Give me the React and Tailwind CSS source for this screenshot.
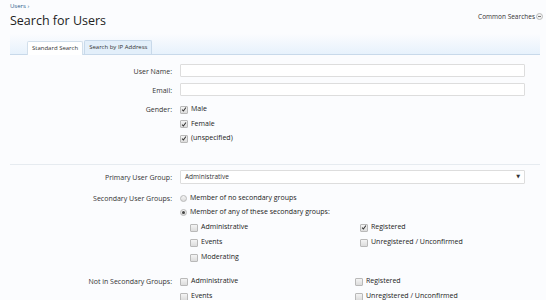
import React from "react";

const font = { fontFamily: '"Segoe UI", "Open Sans", "DejaVu Sans", sans-serif' };

function Check({ checked }) {
  return (
    <span className="inline-flex items-center justify-center w-[8px] h-[8px] border border-[#b9b9b9] bg-gradient-to-b from-[#f4f4f4] to-[#dcdcdc] rounded-[1px] mr-[3px] shrink-0">
      {checked && (
        <svg width="7" height="7" viewBox="0 0 8 8">
          <path d="M1.5 4.2 L3.2 6 L6.6 1.4" stroke="#333" strokeWidth="1.4" fill="none" />
        </svg>
      )}
    </span>
  );
}

function Radio({ checked }) {
  return (
    <span className="inline-flex items-center justify-center w-[7px] h-[7px] rounded-full border border-[#b9b9b9] bg-gradient-to-b from-[#f4f4f4] to-[#dcdcdc] mr-[3px] shrink-0">
      {checked && <span className="w-[3px] h-[3px] rounded-full bg-[#444]" />}
    </span>
  );
}

function Opt({ checked, children, radio, h = "h-[15px]" }) {
  return (
    <div className={"flex items-center text-[7px] text-[#222] " + h}>
      {radio ? <Radio checked={checked} /> : <Check checked={checked} />}
      <span>{children}</span>
    </div>
  );
}

function Row({ label, children, className = "" }) {
  return (
    <div className={"flex " + className}>
      <div className="w-[172px] text-right text-[7px] text-[#333] shrink-0 leading-[15px]">{label}</div>
      <div className="ml-[8px] flex-1">{children}</div>
    </div>
  );
}

export default function App() {
  return (
    <div className="w-[546px] h-[300px] overflow-hidden bg-[#fbfcfe]" style={font}>
      <div className="pl-[10px] pr-[3px] pt-[2px]">
        <div className="text-[6px] text-[#2b5c8c] leading-[8px]">Users ›</div>
        <div className="flex items-start justify-between">
          <h1 className="text-[12.5px] text-[#222] leading-[18px] mt-[2px]">Search for Users</h1>
          <div className="flex items-center text-[6.5px] text-[#333] mt-[2px]">
            Common Searches
            <span className="ml-[1px] w-[7px] h-[7px] rounded-full border border-[#bbb] bg-[#f2f2f2] inline-flex items-center justify-center">
              <span className="w-[3px] h-[1px] bg-[#777]" />
            </span>
          </div>
        </div>
      </div>
      <div className="ml-[10px] mr-[6px] mt-[4px] h-[21px] bg-gradient-to-b from-[#fbfcfe] to-[#e7f2fc] border-b border-[#c8d9ea] flex items-end pl-[17px]">
        <div className="h-[14px] px-[4px] bg-white border border-b-0 border-[#d2dfeb] text-[6px] text-[#333] flex items-center rounded-t-[2px] -mb-px">Standard Search</div>
        <div className="h-[14px] px-[4px] bg-[#e3effa] border border-b-0 border-[#c8d9ea] text-[6px] text-[#333] flex items-center rounded-t-[2px] ml-[1px]">Search by IP Address</div>
      </div>

      <div className="mt-[9px]">
        <Row label="User Name:" className="h-[19px]">
          <div className="w-[345px] h-[13px] bg-white border border-[#ddd] rounded-[1px]" />
        </Row>
        <Row label="Email:" className="h-[19px]">
          <div className="w-[345px] h-[13px] bg-white border border-[#ddd] rounded-[1px]" />
        </Row>
        <Row label="Gender:">
          <Opt checked>Male</Opt>
          <Opt checked h="h-[14px]">Female</Opt>
          <Opt checked>(unspecified)</Opt>
        </Row>
      </div>

      <div className="ml-[10px] mr-[6px] mt-[18px] border-t border-[#e6ebf0]" />

      <div className="mt-[5px]">
        <Row label="Primary User Group:" className="h-[21px]">
          <div className="w-[345px] h-[14px] bg-white border border-[#ddd] rounded-[1px] flex items-center justify-between px-[4px] text-[6.5px] text-[#333]">
            <span>Administrative</span>
            <span className="text-[5px]">▼</span>
          </div>
        </Row>
        <Row label="Secondary User Groups:">
          <Opt radio h="h-[14px]">Member of no secondary groups</Opt>
          <Opt radio checked h="h-[15px]">Member of any of these secondary groups:</Opt>
          <div className="pl-[10px] grid grid-cols-[170px_1fr]">
            <Opt>Administrative</Opt>
            <Opt checked>Registered</Opt>
            <Opt>Events</Opt>
            <Opt>Unregistered / Unconfirmed</Opt>
            <Opt>Moderating</Opt>
          </div>
        </Row>
        <Row label="Not in Secondary Groups:" className="mt-[9px]">
          <div className="grid grid-cols-[175px_1fr]">
            <Opt>Administrative</Opt>
            <Opt>Registered</Opt>
            <Opt>Events</Opt>
            <Opt>Unregistered / Unconfirmed</Opt>
          </div>
        </Row>
      </div>
    </div>
  );
}
